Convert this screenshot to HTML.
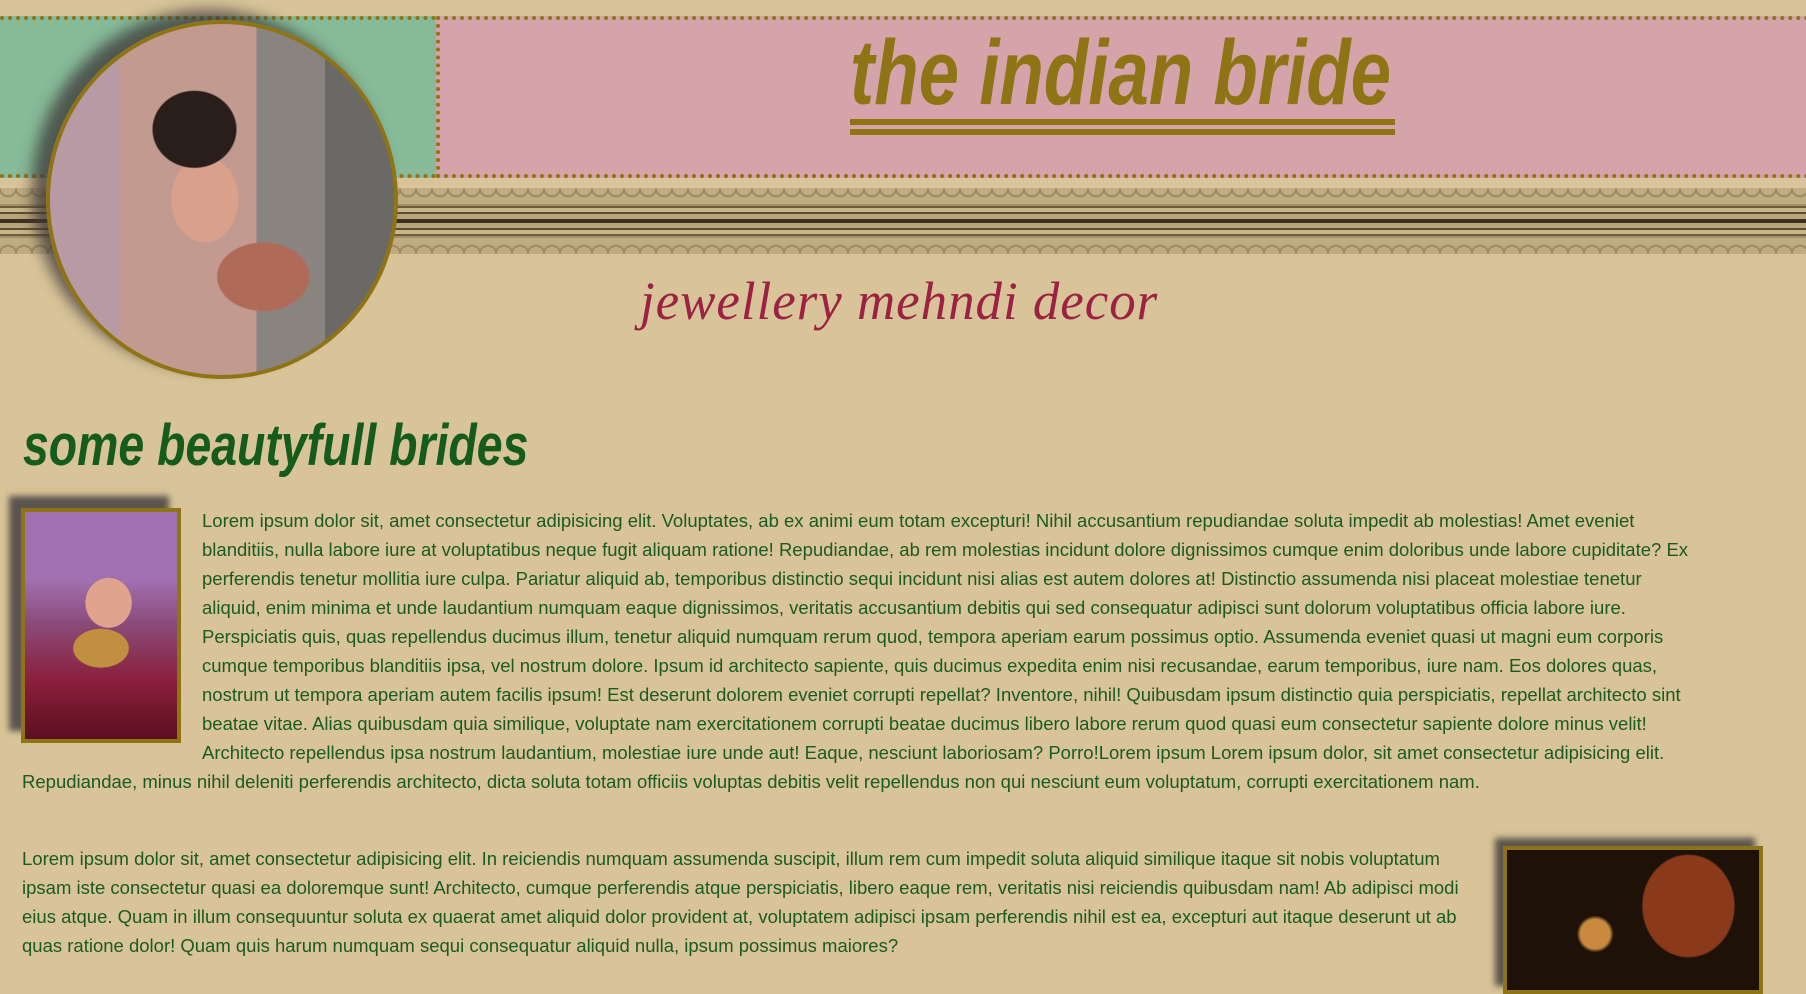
<!DOCTYPE html>
<html><head><meta charset="utf-8"><style>
html,body{margin:0;padding:0}
body{width:1806px;height:940px;overflow:hidden;background:#d8c498;position:relative;font-family:"Liberation Sans Narrow","Liberation Sans",sans-serif;}
.green{position:absolute;left:0;top:16px;width:436px;height:154px;background:#86ba98;border-top:4px dotted #8f7416;border-bottom:4px dotted #8f7416;}
.pink{position:absolute;left:436px;top:16px;width:1366px;height:154px;background:#d5a4ab;border:4px dotted #8f7416;}
.strip{position:absolute;left:0;top:182px;width:1806px;height:78px;
background:
radial-gradient(circle at 50% 0,transparent 7px,rgba(90,70,40,.45) 8px,transparent 10px) 0 6px/16px 16px repeat-x,
radial-gradient(circle at 50% 100%,transparent 7px,rgba(90,70,40,.45) 8px,transparent 10px) 0 56px/16px 16px repeat-x,
linear-gradient(#d8c498 0 6px,#bfac80 6px 22px,#a49068 22px 24px,#6e5c3c 24px 26px,#c9b589 26px 30px,#5e4c30 30px 32px,#b9a57b 32px 37px,#3e3020 37px 41px,#b9a57b 41px 46px,#5e4c30 46px 48px,#c9b589 48px 52px,#6e5c3c 52px 54px,#a49068 54px 56px,#bfac80 56px 72px,#d8c498 72px);}
.circ{position:absolute;left:46px;top:20px;width:344px;height:351px;border-radius:50%;border:4px solid #8f7416;box-shadow:-14px -10px 14px rgba(60,55,55,.75);
background:radial-gradient(ellipse 20% 18% at 42% 30%,#2a1e1a 60%,transparent 62%),radial-gradient(ellipse 16% 20% at 45% 50%,#d9a08c 60%,transparent 62%),radial-gradient(ellipse 22% 16% at 62% 72%,#b06a58 60%,transparent 62%),linear-gradient(90deg,#b89aa4 0 20%,#c29a90 20% 60%,#8a8480 60% 80%,#6b6966 80%);overflow:hidden}
.title{position:absolute;left:850px;top:18px;font:italic bold 92px "Liberation Sans",sans-serif;color:#8f7416;line-height:110px;transform:scaleX(0.79);transform-origin:0 0;white-space:nowrap}
.ul1{position:absolute;left:850px;top:119px;width:545px;height:6px;background:#8f7416}
.ul2{position:absolute;left:850px;top:129px;width:545px;height:6px;background:#8f7416}
.sub{position:absolute;left:640px;top:270px;font:italic 54px "Liberation Serif",serif;color:#9b2242;letter-spacing:1px;transform:scaleX(0.98);transform-origin:0 0;white-space:nowrap}
h2{position:absolute;left:23px;top:412px;margin:0;font:italic bold 58px "Liberation Sans",sans-serif;color:#155c1c;transform:scaleX(0.8);transform-origin:0 0;white-space:nowrap}
.p{position:absolute;color:#1b5a22;font-size:18.5px;line-height:29px}
.img1{position:absolute;left:21px;top:508px;width:152px;height:227px;border:4px solid #8f7416;box-shadow:-12px -12px 6px rgba(70,65,65,.85);
background:radial-gradient(ellipse 25% 18% at 55% 40%,#e0a48e 60%,transparent 62%),radial-gradient(ellipse 30% 14% at 50% 60%,#c09040 60%,transparent 62%),linear-gradient(#a070b0 0 30%,#8a4a78 50%,#8a1e3a 75%,#5a1020)}
.img2{position:absolute;left:1503px;top:846px;width:252px;height:140px;border:4px solid #8f7416;box-shadow:-8px -8px 6px rgba(70,65,65,.85);
background:radial-gradient(ellipse 30% 60% at 72% 40%,#8a3a1a 60%,transparent 62%),radial-gradient(circle at 35% 60%,#c98a40 8%,transparent 10%),#1e1208}
</style></head><body>
<div class="green"></div><div class="pink"></div>
<div class="strip"></div>
<div class="circ"></div>
<div class="title">the indian bride</div><div class="ul1"></div><div class="ul2"></div>
<div class="sub">jewellery mehndi decor</div>
<h2>some beautyfull brides</h2>
<div class="img1"></div>
<div class="p" style="left:202px;top:506px;width:1510px">Lorem ipsum dolor sit, amet consectetur adipisicing elit. Voluptates, ab ex animi eum totam excepturi! Nihil accusantium repudiandae soluta impedit ab molestias! Amet eveniet<br>blanditiis, nulla labore iure at voluptatibus neque fugit aliquam ratione! Repudiandae, ab rem molestias incidunt dolore dignissimos cumque enim doloribus unde labore cupiditate? Ex<br>perferendis tenetur mollitia iure culpa. Pariatur aliquid ab, temporibus distinctio sequi incidunt nisi alias est autem dolores at! Distinctio assumenda nisi placeat molestiae tenetur<br>aliquid, enim minima et unde laudantium numquam eaque dignissimos, veritatis accusantium debitis qui sed consequatur adipisci sunt dolorum voluptatibus officia labore iure.<br>Perspiciatis quis, quas repellendus ducimus illum, tenetur aliquid numquam rerum quod, tempora aperiam earum possimus optio. Assumenda eveniet quasi ut magni eum corporis<br>cumque temporibus blanditiis ipsa, vel nostrum dolore. Ipsum id architecto sapiente, quis ducimus expedita enim nisi recusandae, earum temporibus, iure nam. Eos dolores quas,<br>nostrum ut tempora aperiam autem facilis ipsum! Est deserunt dolorem eveniet corrupti repellat? Inventore, nihil! Quibusdam ipsum distinctio quia perspiciatis, repellat architecto sint<br>beatae vitae. Alias quibusdam quia similique, voluptate nam exercitationem corrupti beatae ducimus libero labore rerum quod quasi eum consectetur sapiente dolore minus velit!<br>Architecto repellendus ipsa nostrum laudantium, molestiae iure unde aut! Eaque, nesciunt laboriosam? Porro!Lorem ipsum Lorem ipsum dolor, sit amet consectetur adipisicing elit.</div>
<div class="p" style="left:22px;top:767px;width:1700px">Repudiandae, minus nihil deleniti perferendis architecto, dicta soluta totam officiis voluptas debitis velit repellendus non qui nesciunt eum voluptatum, corrupti exercitationem nam.</div>
<div class="img2"></div>
<div class="p" style="left:22px;top:844px;width:1480px">Lorem ipsum dolor sit, amet consectetur adipisicing elit. In reiciendis numquam assumenda suscipit, illum rem cum impedit soluta aliquid similique itaque sit nobis voluptatum<br>ipsam iste consectetur quasi ea doloremque sunt! Architecto, cumque perferendis atque perspiciatis, libero eaque rem, veritatis nisi reiciendis quibusdam nam! Ab adipisci modi<br>eius atque. Quam in illum consequuntur soluta ex quaerat amet aliquid dolor provident at, voluptatem adipisci ipsam perferendis nihil est ea, excepturi aut itaque deserunt ut ab<br>quas ratione dolor! Quam quis harum numquam sequi consequatur aliquid nulla, ipsum possimus maiores?</div>
</body></html>
